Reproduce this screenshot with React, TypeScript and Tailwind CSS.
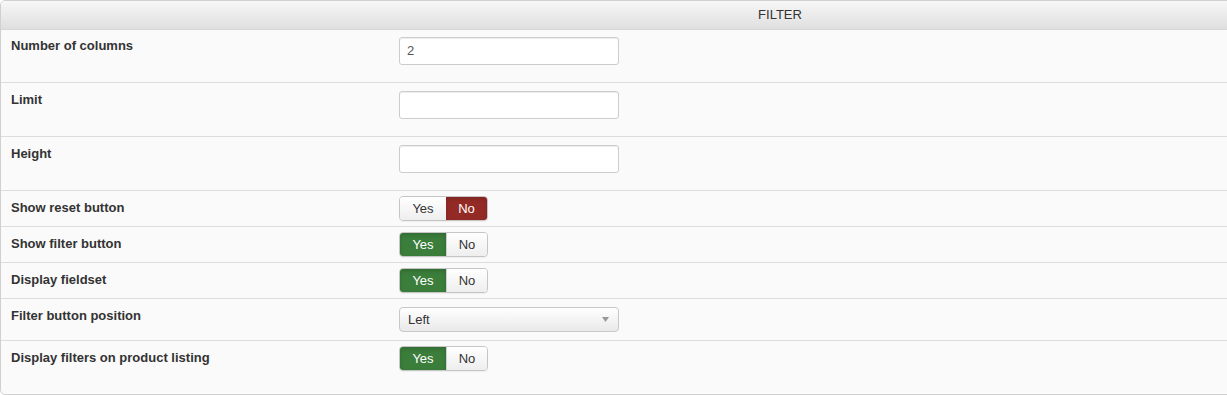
import React from 'react';

const font = { fontFamily: '"Liberation Sans", Arial, sans-serif' };

type RowProps = {
  label: string;
  children?: React.ReactNode;
  className: string;
  labelPad: string;
  ctrlPad: string;
};

function Row({ label, children, className, labelPad, ctrlPad }: RowProps) {
  return (
    <div className={`flex border-b border-[#dddddd] ${className}`}>
      <div className={`w-[398px] shrink-0 pl-[10px] text-[13px] font-bold leading-[18px] text-[#333333] ${labelPad}`}>
        {label}
      </div>
      <div className={ctrlPad}>{children}</div>
    </div>
  );
}

function TextInput({ value }: { value?: string }) {
  return (
    <div className="flex h-[28px] w-[220px] items-center rounded-[3px] border border-[#cccccc] bg-white pl-[7px] text-[13px] text-[#555555] shadow-[inset_0_1px_1px_rgba(0,0,0,0.075)]">
      {value}
    </div>
  );
}

function YesNo({ value }: { value: 'yes' | 'no' }) {
  const base = 'flex h-full items-center justify-center text-[13px] leading-none';
  return (
    <div className="flex h-[25px] w-[89px] overflow-hidden rounded-[4px] border border-[#c5c5c5] shadow-[0_1px_1px_rgba(0,0,0,0.05)]">
      <div
        className={`${base} w-[46px] ${
          value === 'yes'
            ? 'bg-[#3b7d3b] text-white shadow-[inset_0_2px_4px_rgba(0,0,0,0.15)]'
            : 'bg-gradient-to-b from-white to-[#eeeeee] text-[#333333]'
        }`}
      >
        Yes
      </div>
      <div
        className={`${base} flex-1 ${
          value === 'no'
            ? 'bg-[#942a25] text-white shadow-[inset_0_2px_4px_rgba(0,0,0,0.15)]'
            : 'border-l border-[#d0d0d0] bg-gradient-to-b from-white to-[#eeeeee] text-[#333333]'
        }`}
      >
        No
      </div>
    </div>
  );
}

function Select({ value }: { value: string }) {
  return (
    <div className="flex h-[25px] w-[220px] items-center justify-between rounded-[4px] border border-[#c8c8c8] bg-gradient-to-b from-white to-[#e9e9e9] pl-[8px] pr-[9px] text-[13px] text-[#333333]">
      <span>{value}</span>
      <svg width="7" height="5" viewBox="0 0 7 5">
        <path d="M0 0h7L3.5 5z" fill="#999999" />
      </svg>
    </div>
  );
}

export default function App() {
  return (
    <div className="h-[395px] w-full overflow-hidden bg-white" style={font}>
      <div className="w-[1560px] overflow-hidden rounded-[5px] border border-[#d0d0d0] bg-[#fafafa]">
        <div className="flex h-[29px] items-center justify-center border-b border-[#d6d6d6] bg-gradient-to-b from-[#f7f7f7] to-[#dfdfdf] pb-[1px] text-[13px] text-[#333333]">
          FILTER
        </div>
        <Row label="Number of columns" className="h-[53px]" labelPad="pt-[7px]" ctrlPad="pt-[7px]">
          <TextInput value="2" />
        </Row>
        <Row label="Limit" className="h-[54px]" labelPad="pt-[8px]" ctrlPad="pt-[8px]">
          <TextInput />
        </Row>
        <Row label="Height" className="h-[54px]" labelPad="pt-[8px]" ctrlPad="pt-[8px]">
          <TextInput />
        </Row>
        <Row label="Show reset button" className="h-[36px]" labelPad="pt-[8px]" ctrlPad="pt-[5px]">
          <YesNo value="no" />
        </Row>
        <Row label="Show filter button" className="h-[36px]" labelPad="pt-[8px]" ctrlPad="pt-[5px]">
          <YesNo value="yes" />
        </Row>
        <Row label="Display fieldset" className="h-[36px]" labelPad="pt-[8px]" ctrlPad="pt-[5px]">
          <YesNo value="yes" />
        </Row>
        <Row label="Filter button position" className="h-[42px]" labelPad="pt-[8px]" ctrlPad="pt-[8px]">
          <Select value="Left" />
        </Row>
        <Row label="Display filters on product listing" className="h-[53px] border-b-0" labelPad="pt-[8px]" ctrlPad="pt-[5px]">
          <YesNo value="yes" />
        </Row>
      </div>
    </div>
  );
}
